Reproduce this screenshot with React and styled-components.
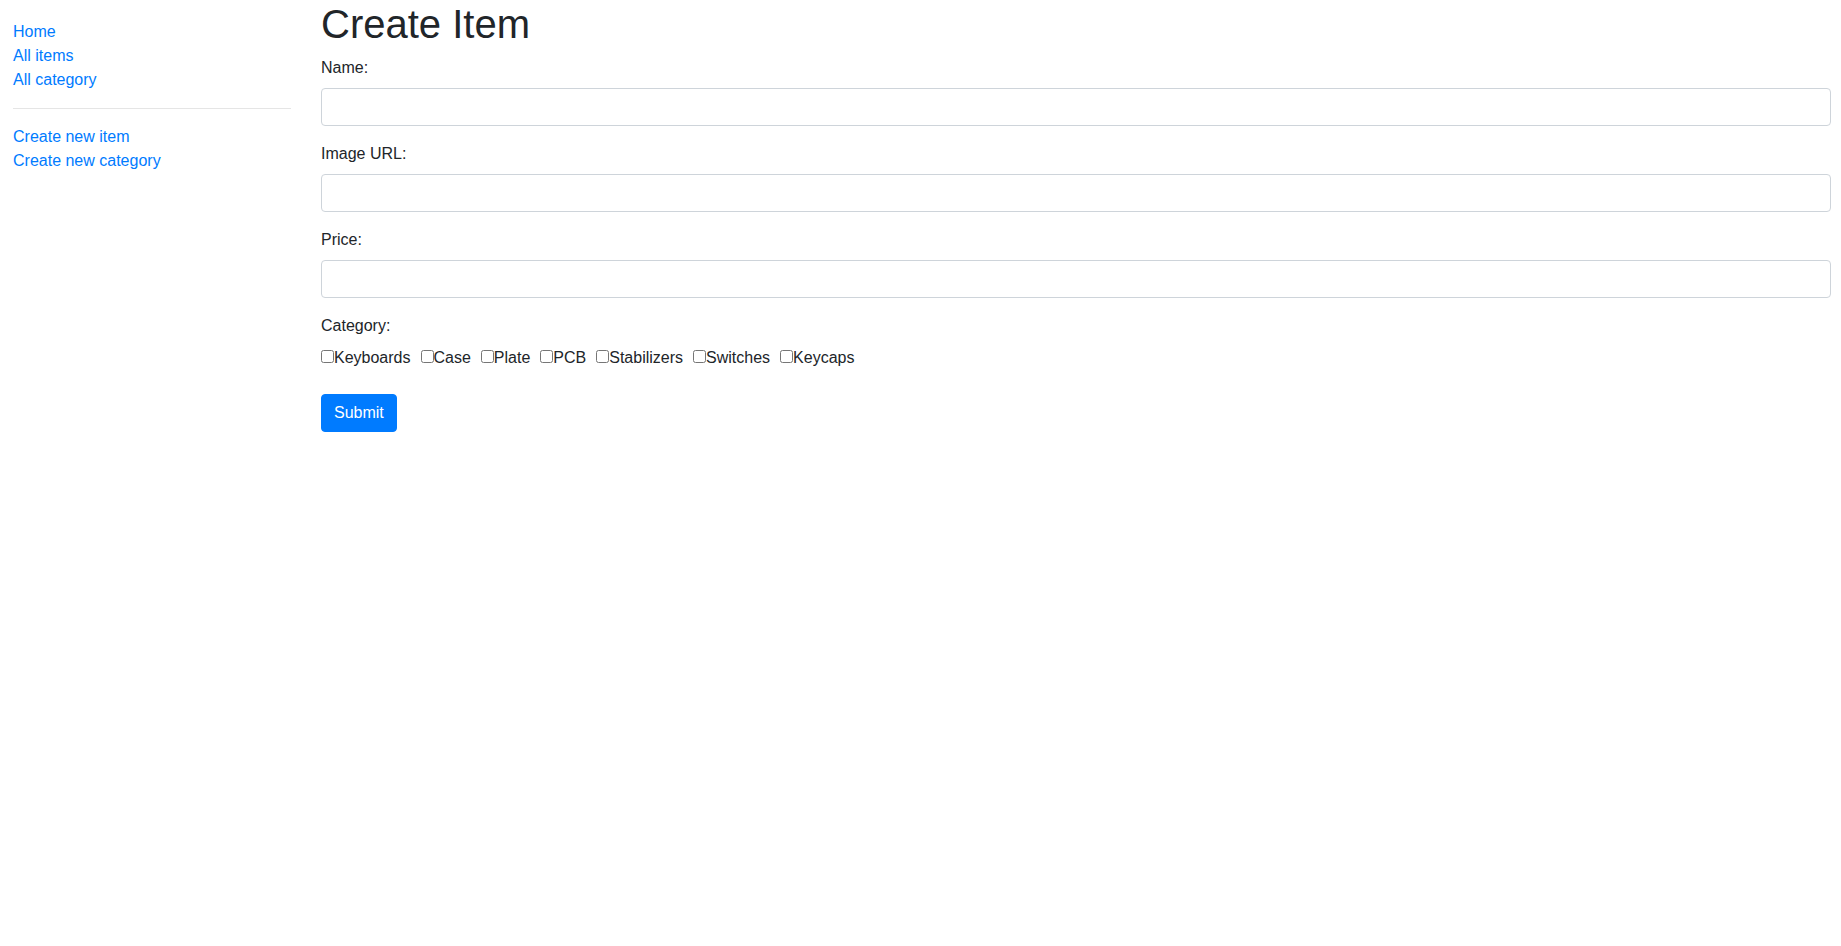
import React from 'react';
import styled, { createGlobalStyle } from 'styled-components';

const GlobalStyle = createGlobalStyle`
  *, *::before, *::after {
    box-sizing: border-box;
  }
  body {
    margin: 0;
    font-family: "Liberation Sans", Arial, sans-serif;
    font-size: 16px;
    line-height: 1.5;
    color: #212529;
    background: #fff;
  }
`;

const Page = styled.div`
  display: flex;
  align-items: flex-start;
  padding: 0 10px 0 13px;
`;

const Sidebar = styled.nav`
  width: 278px;
  flex-shrink: 0;
  padding-top: 20px;
`;

const NavList = styled.div`
  display: flex;
  flex-direction: column;
  align-items: flex-start;
`;

const NavLink = styled.a`
  color: #007bff;
  text-decoration: none;
  line-height: 24px;
  cursor: pointer;

  &:hover {
    text-decoration: underline;
  }
`;

const Divider = styled.hr`
  margin: 16px 0;
  border: 0;
  border-top: 1px solid rgba(0, 0, 0, 0.1);
`;

const Main = styled.main`
  flex: 1;
  margin-left: 30px;
`;

const Title = styled.h1`
  margin: 0 0 8px;
  font-size: 40px;
  font-weight: 500;
  line-height: 1.2;
`;

const FormGroup = styled.div`
  margin-bottom: 16px;
`;

const Label = styled.label`
  display: block;
  margin-bottom: 8px;
  line-height: 24px;
`;

const Input = styled.input`
  display: block;
  width: 100%;
  height: 38px;
  padding: 6px 12px;
  font: inherit;
  color: #495057;
  background: #fff;
  border: 1px solid #ced4da;
  border-radius: 4px;
  outline: none;

  &:focus {
    border-color: #80bdff;
    box-shadow: 0 0 0 3px rgba(0, 123, 255, 0.25);
  }
`;

const CheckRow = styled.div`
  display: flex;
  flex-wrap: wrap;
  align-items: baseline;
  gap: 10px;
  line-height: 24px;
  margin-bottom: 24px;
`;

const CheckLabel = styled.label`
  display: inline-block;
  white-space: nowrap;
`;

const CheckBox = styled.input`
  width: 13px;
  height: 13px;
  margin: 0;
  vertical-align: baseline;
`;

const SubmitButton = styled.button`
  display: inline-block;
  padding: 6px 12px;
  font: inherit;
  line-height: 24px;
  color: #fff;
  background: #007bff;
  border: 1px solid #007bff;
  border-radius: 4px;
  cursor: pointer;

  &:hover {
    background: #0069d9;
  }
`;

const categories = [
  'Keyboards',
  'Case',
  'Plate',
  'PCB',
  'Stabilizers',
  'Switches',
  'Keycaps',
];

function App() {
  const handleSubmit = (e) => {
    e.preventDefault();
  };

  return (
    <>
      <GlobalStyle />
      <Page>
        <Sidebar>
          <NavList>
            <NavLink>Home</NavLink>
            <NavLink>All items</NavLink>
            <NavLink>All category</NavLink>
          </NavList>
          <Divider />
          <NavList>
            <NavLink>Create new item</NavLink>
            <NavLink>Create new category</NavLink>
          </NavList>
        </Sidebar>

        <Main>
          <Title>Create Item</Title>
          <form onSubmit={handleSubmit}>
            <FormGroup>
              <Label htmlFor="name">Name:</Label>
              <Input id="name" type="text" autoComplete="off" />
            </FormGroup>
            <FormGroup>
              <Label htmlFor="imageUrl">Image URL:</Label>
              <Input id="imageUrl" type="text" autoComplete="off" />
            </FormGroup>
            <FormGroup>
              <Label htmlFor="price">Price:</Label>
              <Input id="price" type="text" autoComplete="off" />
            </FormGroup>
            <Label>Category:</Label>
            <CheckRow>
              {categories.map((c) => (
                <CheckLabel key={c}>
                  <CheckBox type="checkbox" name="category" value={c} />
                  {c}
                </CheckLabel>
              ))}
            </CheckRow>
            <SubmitButton type="submit">Submit</SubmitButton>
          </form>
        </Main>
      </Page>
    </>
  );
}

export default App;
